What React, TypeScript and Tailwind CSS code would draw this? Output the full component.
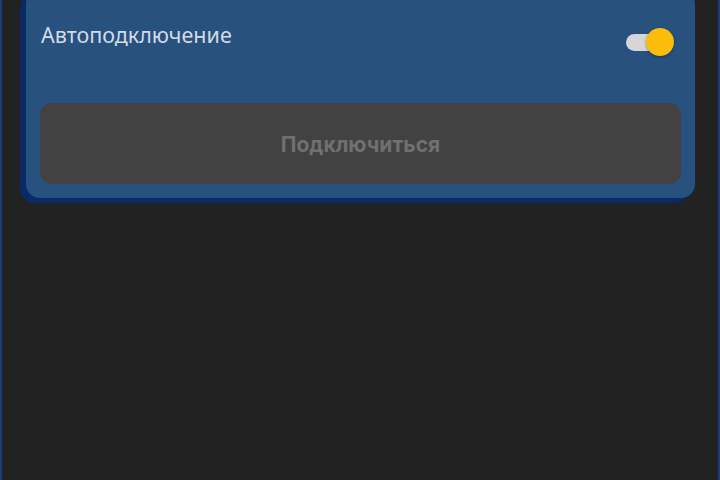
import React from "react";

export default function App() {
  return (
    <div className="min-h-screen w-full bg-[#222222] border-x-2 border-[#1d3d78] overflow-hidden" style={{ fontFamily: '"Noto Sans", "Open Sans", sans-serif' }}>
      <div className="ml-[24px] mr-[23px] -mt-[10px] rounded-[14px] bg-[#27517f] shadow-[-6px_5px_0_#0a2966] px-[14px] pt-[30px] pb-[14px]">
        <div className="flex items-start justify-between">
          <span className="pl-px text-[21.5px] leading-[29px] text-[#d3dbe6]">Автоподключение</span>
          <div className="relative mr-[7px] mt-[8px] h-[28px] w-[48px]">
            <div className="absolute left-0 top-[6px] h-[17px] w-[34px] rounded-full bg-[#d6d6d6]" />
            <div className="absolute right-0 top-0 h-[28px] w-[28px] rounded-full bg-[#fbbd0b] shadow-[0_1px_3px_rgba(0,0,0,0.35)]" />
          </div>
        </div>
        <button className="mt-[47px] flex h-[81px] w-full items-center justify-center rounded-[12px] bg-[#424242] pt-[2px] text-[21px] font-bold text-[#707070]" style={{ fontFamily: 'Inter, "Noto Sans", sans-serif' }}>
          Подключиться
        </button>
      </div>
    </div>
  );
}
